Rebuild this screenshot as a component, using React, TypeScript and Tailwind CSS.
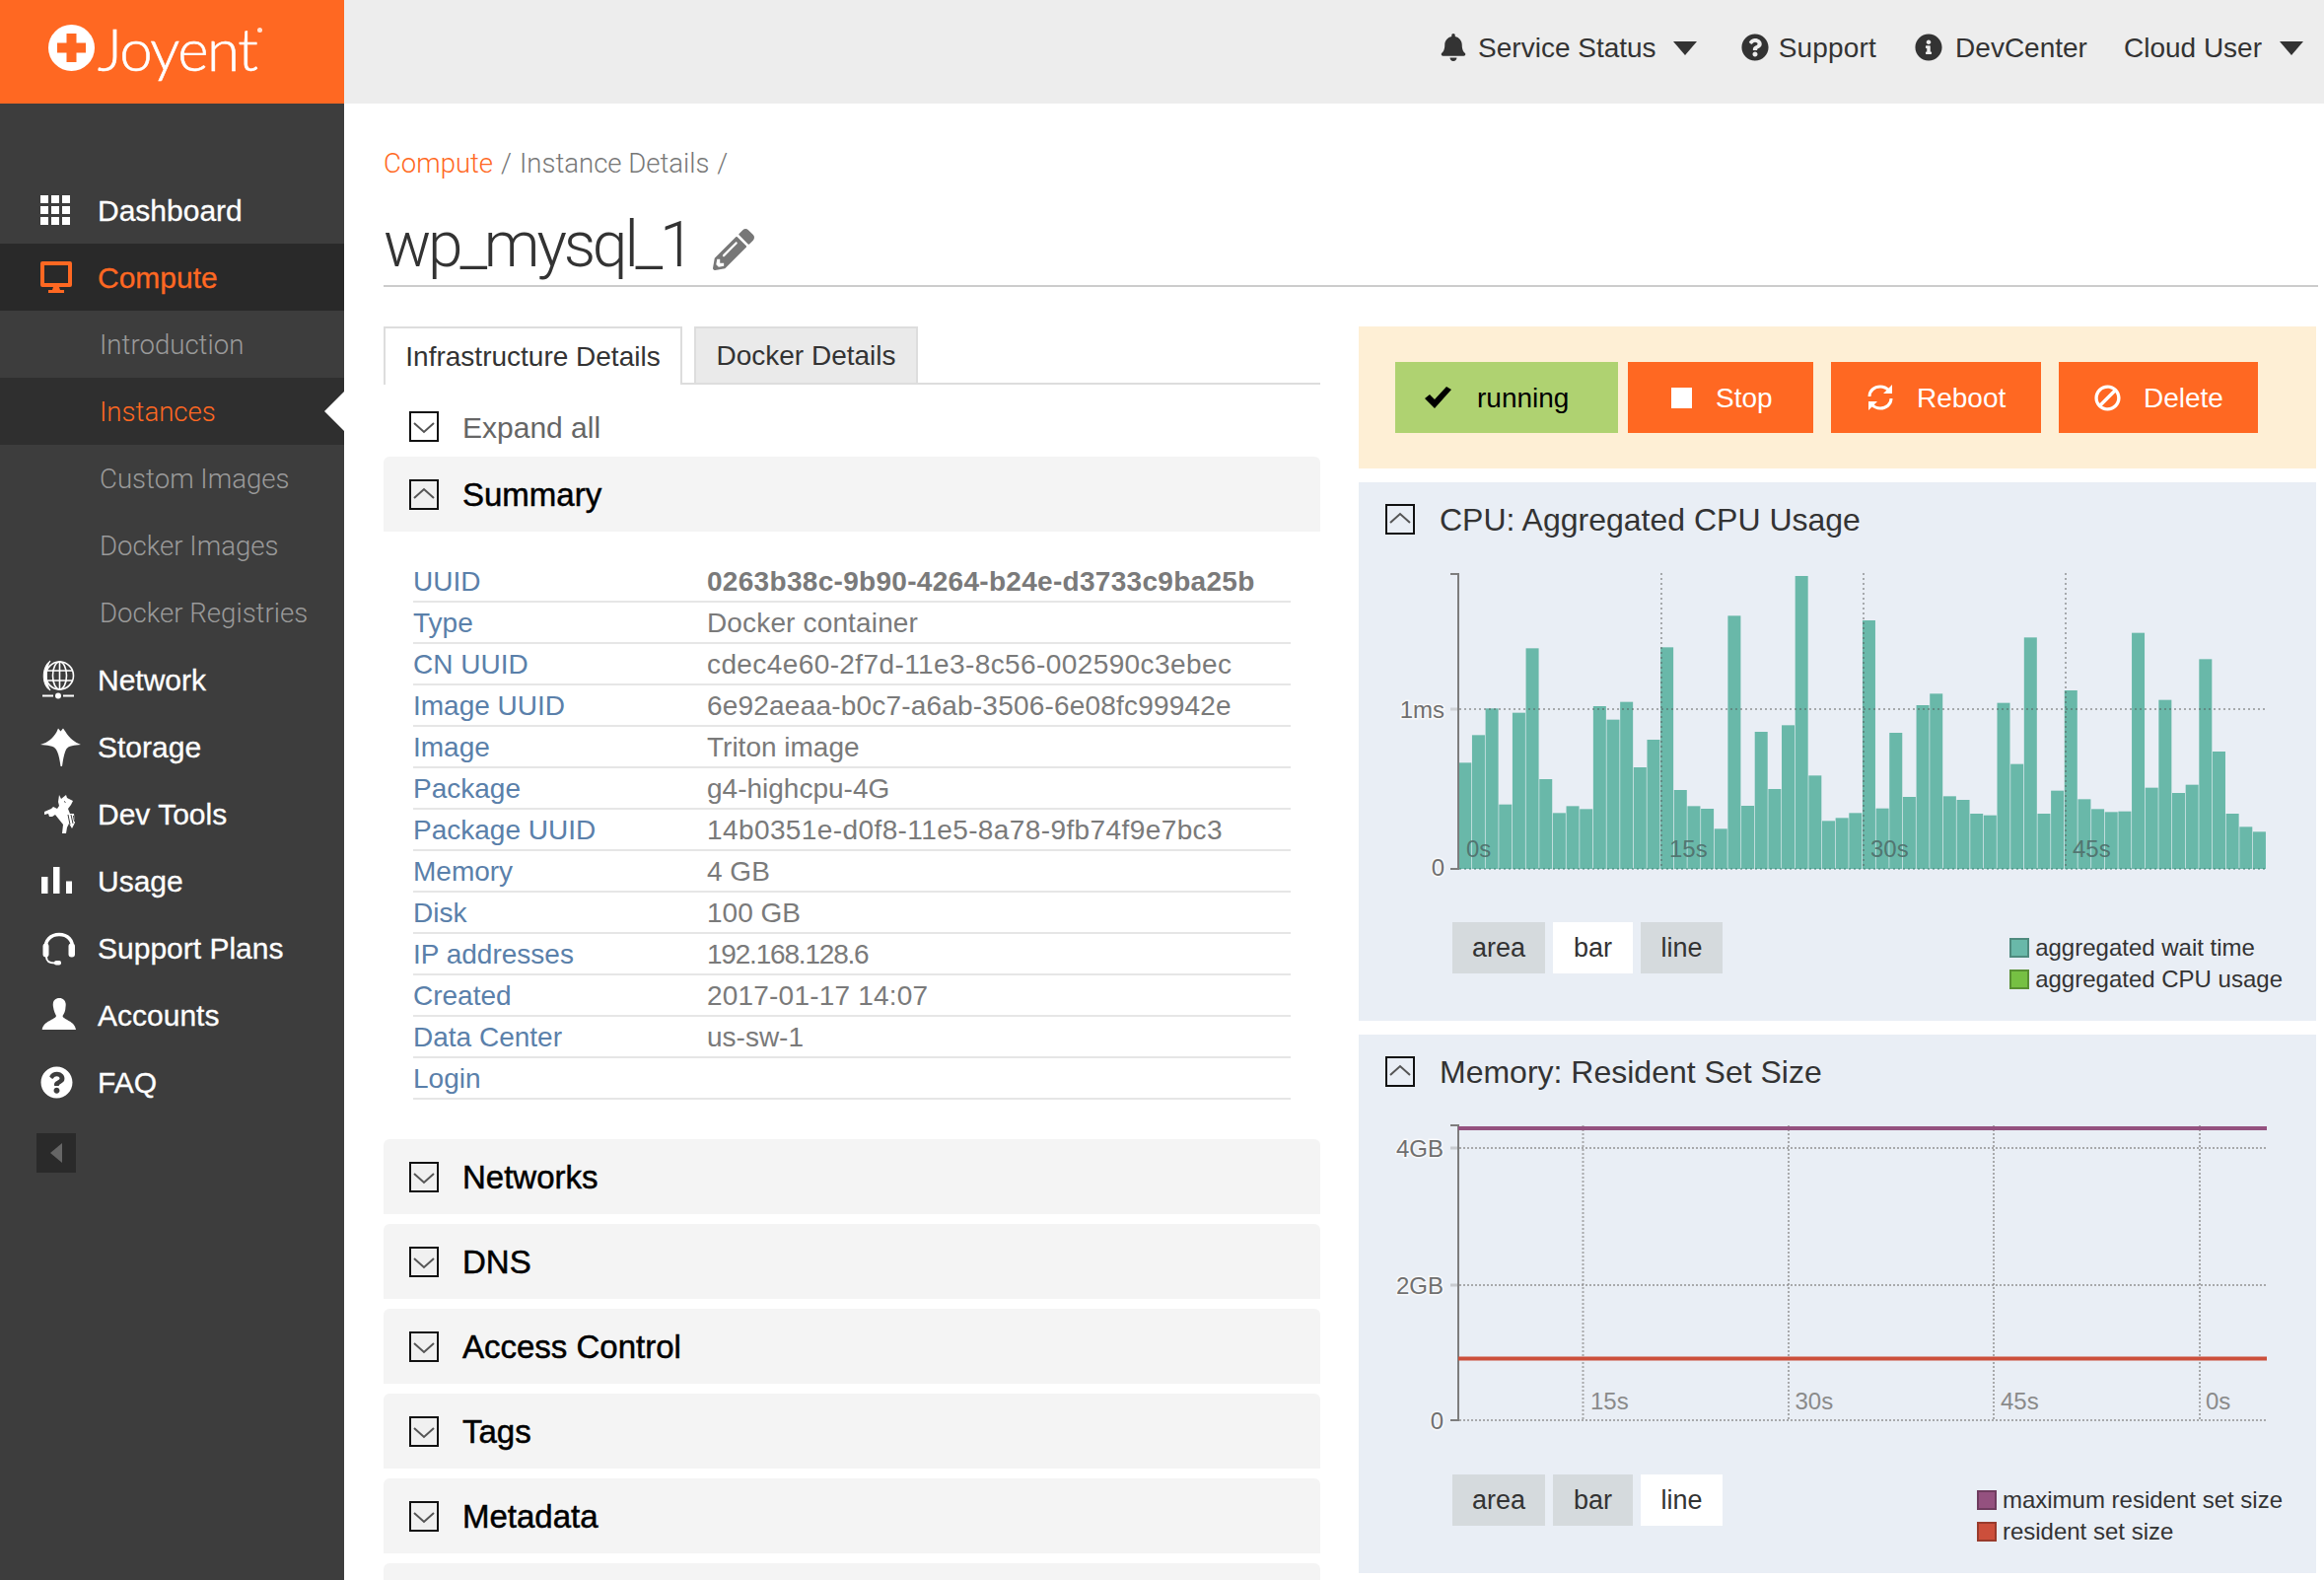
import { FaBell, FaBan, FaInfoCircle, FaPencilAlt, FaQuestionCircle } from 'react-icons/fa'

const orange = 'text-[#ff6822]'

// bar tops, read off the reference in page pixels
const cpuTops = [
  700, 616, 535, 827, 548, 352, 750, 853, 832, 841, 528, 569, 515, 714, 630, 349, 783, 832, 840, 901, 253, 831, 606, 780,
  586, 132, 739, 877, 868, 853, 267, 839, 609, 804, 525, 490, 802, 813, 855, 860, 518, 704, 319, 855, 785, 480, 811, 841,
  850, 848, 305, 776, 509, 792, 767, 385, 666, 855, 895, 910,
].map((z) => 540 + z / 3)

const summaryRows = [
  { k: 'UUID', v: '0263b38c-9b90-4264-b24e-d3733c9ba25b', cls: 'font-bold tracking-[0.3px]' },
  { k: 'Type', v: 'Docker container', cls: 'tracking-[0.15px]' },
  { k: 'CN UUID', v: 'cdec4e60-2f7d-11e3-8c56-002590c3ebec', cls: 'tracking-[0.4px]' },
  { k: 'Image UUID', v: '6e92aeaa-b0c7-a6ab-3506-6e08fc99942e', cls: 'tracking-[0.2px]' },
  { k: 'Image', v: 'Triton image', cls: '' },
  { k: 'Package', v: 'g4-highcpu-4G', cls: '' },
  { k: 'Package UUID', v: '14b0351e-d0f8-11e5-8a78-9fb74f9e7bc3', cls: 'tracking-[0.4px]' },
  { k: 'Memory', v: '4 GB', cls: '' },
  { k: 'Disk', v: '100 GB', cls: '' },
  { k: 'IP addresses', v: '192.168.128.6', cls: 'tracking-[-1.2px]' },
  { k: 'Created', v: '2017-01-17 14:07', cls: 'tracking-[0.2px]' },
  { k: 'Data Center', v: 'us-sw-1', cls: '' },
  { k: 'Login', v: '', cls: '' },
]

function GridIcon() {
  const cells = [0, 11, 22]
  return (
    <svg width="30" height="30" viewBox="0 0 30 30" fill="#fff">
      {cells.map((y) => cells.map((x) => <rect key={`${x}-${y}`} x={x} y={y} width="8" height="8" />))}
    </svg>
  )
}

function MonitorIcon() {
  return (
    <svg width="32" height="32" viewBox="0 0 32 32" fill="#ff6822">
      <path d="M2 0h28a2 2 0 0 1 2 2v22a2 2 0 0 1-2 2H2a2 2 0 0 1-2-2V2a2 2 0 0 1 2-2zm2 4v18h24V4z" fillRule="evenodd" />
      <path d="M13 26h6l1 3h4v3H8v-3h4z" />
    </svg>
  )
}

function GlobeIcon() {
  return (
    <svg width="36" height="44" viewBox="0 0 36 44" fill="none" stroke="#fff" strokeWidth="1.6">
      <circle cx="19.5" cy="18" r="14" />
      <ellipse cx="19.5" cy="18" rx="7" ry="14" />
      <path d="M19.5 4v28M6 13h27M6 23h27" />
      <path d="M10 3C1 9 1 28 10 33C5 26 5 10 10 3Z" fill="#fff" stroke="#fff" strokeWidth="1" />
      <path d="M2 38.5h11M23 38.5h11" strokeWidth="2" />
      <circle cx="18" cy="38.5" r="3" fill="#fff" stroke="none" />
    </svg>
  )
}

function MantaIcon() {
  return (
    <svg width="42" height="44" viewBox="0 0 42 44" fill="#fff">
      <path d="M0 20C8 18 13 13 16.500 7L18 3.500L20.500 6.500L23 3.500L25.500 7C29 13 35 18 41 20C35 20.500 28 21 26 25C24 29 23 35 22 42L20.500 42C19.500 35 18.500 29 16 25C14 21 6 20.500 0 20Z" />
    </svg>
  )
}

function PonyIcon() {
  return (
    <svg width="36" height="44" viewBox="0 0 36 44" fill="#fff">
      <path d="M19 3L21 7L26 3L27 6L33 9L31 13L28 17L30 22L34 22L35 31L32 37L29 32L27 36L26 42L22 42L23 33L19 28L15 23L12 25L9 25L8 22L4 23L4 20L11 17L13 15L17 17L19 14L18 10Z" />
      <path d="M28 23L30 33M31 23L33 32M33.500 24L34.500 30M24 9.500L25.500 10.500" stroke="#3d3d3d" strokeWidth="1" fill="none" />
    </svg>
  )
}

function BarsIcon() {
  return (
    <svg width="32" height="28" viewBox="0 0 32 28" fill="#fff">
      <rect x="1" y="10" width="6.500" height="17" />
      <rect x="13" y="0" width="6.500" height="27" />
      <rect x="26" y="14.500" width="6.500" height="12.500" />
    </svg>
  )
}

function HeadsetIcon() {
  return (
    <svg width="38" height="44" viewBox="0 0 38 44" fill="none" stroke="#fff">
      <path d="M5.500 24C4 14 11 8.500 19 8.500C27 8.500 34 14 32 24" strokeWidth="3.500" />
      <rect x="28.500" y="17.500" width="6.500" height="14" rx="3" fill="#fff" stroke="none" />
      <rect x="2.500" y="17.500" width="6" height="14" rx="3" fill="#fff" stroke="none" />
      <path d="M6 31C6 36 9 37.500 15 37.500" strokeWidth="2" />
      <rect x="14" y="35" width="7" height="4.500" rx="2" fill="#fff" stroke="none" />
    </svg>
  )
}

function PersonIcon() {
  return (
    <svg width="38" height="44" viewBox="0 0 38 44" fill="#fff">
      <path d="M19.300 5C14 5 12 9 13 14C13.500 18 15 21 16 23C15 27 3 28 1.700 37L36 37C35 28 23 27 22.500 23C24 21 25.500 18 25.500 14C26.500 9 24 5 19.300 5Z" />
    </svg>
  )
}

function NavRow({ icon, label, active }: { icon: React.ReactNode; label: string; active?: boolean }) {
  return (
    <div className={`flex h-[68px] items-center ${active ? 'bg-[#292929]' : ''}`}>
      <div className="flex w-[99px] shrink-0 items-center pl-[41px]">{icon}</div>
      <span className={`text-[30px] [-webkit-text-stroke:0.3px] ${active ? orange : 'text-white'}`}>{label}</span>
    </div>
  )
}

function SubRow({ label, active }: { label: string; active?: boolean }) {
  return (
    <div className={`relative flex h-[68px] items-center pt-[1px] pl-[101px] font-['Roboto',sans-serif] text-[27.600px] font-light ${active ? `bg-[#2f2f2f] ${orange}` : 'text-[#9a9a9a]'}`}>
      {label}
      {active && (
        <span className="absolute top-[14px] right-0 h-0 w-0 border-y-[20px] border-r-[20px] border-y-transparent border-r-white" />
      )}
    </div>
  )
}

function Sidebar() {
  return (
    <aside className="flex w-[349px] shrink-0 flex-col bg-[#3d3d3d]">
      <div className="relative flex h-[105px] items-center bg-[#ff6822] pb-[8px] pl-[49px]">
        <svg width="47" height="47" viewBox="0 0 47 47">
          <circle cx="23.500" cy="23.500" r="23.500" fill="#fff" />
          <path d="M18.500 9h10v9.500H38v10h-9.500V38h-10v-9.500H9v-10h9.500z" fill="#ff6822" />
        </svg>
        <span className="ml-[3px] font-['Lato',sans-serif] text-[60px] leading-none font-light tracking-[-1.5px] text-white [-webkit-text-stroke:0.6px]">Joyent</span>
        <span className="absolute top-[28px] left-[261px] h-[5px] w-[5px] rounded-full bg-white/80" />
      </div>
      <div className="pt-[74px]">
        <NavRow icon={<GridIcon />} label="Dashboard" />
        <NavRow icon={<MonitorIcon />} label="Compute" active />
        <SubRow label="Introduction" />
        <SubRow label="Instances" active />
        <SubRow label="Custom Images" />
        <SubRow label="Docker Images" />
        <SubRow label="Docker Registries" />
        <NavRow icon={<GlobeIcon />} label="Network" />
        <NavRow icon={<MantaIcon />} label="Storage" />
        <NavRow icon={<PonyIcon />} label="Dev Tools" />
        <NavRow icon={<BarsIcon />} label="Usage" />
        <NavRow icon={<HeadsetIcon />} label="Support Plans" />
        <NavRow icon={<PersonIcon />} label="Accounts" />
        <NavRow icon={<FaQuestionCircle size={33} color="#fff" />} label="FAQ" />
      </div>
      <div className="mt-[18px] ml-[37px] flex h-[40px] w-[40px] items-center justify-center bg-[#2a2a2a]">
        <span className="h-0 w-0 border-y-[10px] border-r-[12px] border-y-transparent border-r-[#666]" />
      </div>
    </aside>
  )
}

function Caret() {
  return <span className="h-0 w-0 border-x-[12px] border-t-[14px] border-x-transparent border-t-[#333]" />
}

function TopBar() {
  return (
    <header className="flex h-[105px] items-center justify-end bg-[#ededed] pr-[21px] pb-[7px] text-[28px] text-[#333]">
      <FaBell size={28} className="mb-[3px]" />
      <span className="ml-[11px]">Service Status</span>
      <span className="mr-[45px] ml-[17px] flex items-center"><Caret /></span>
      <FaQuestionCircle size={28} className="mb-[2px]" />
      <span className="mr-[39px] ml-[10px] tracking-[0.2px]">Support</span>
      <FaInfoCircle size={28} className="mb-[2px]" />
      <span className="mr-[37px] ml-[13px]">DevCenter</span>
      <span>Cloud User</span>
      <span className="ml-[18px] flex items-center"><Caret /></span>
    </header>
  )
}

function BoxToggle({ open, dark }: { open?: boolean; dark?: boolean }) {
  return (
    <svg width="30" height="31" viewBox="0 0 30 31" className="shrink-0">
      <rect x="1" y="1" width="28" height="29" fill={dark ? '#f0f0f0' : 'none'} stroke="#111" strokeWidth="2" />
      <path d={open ? 'M5 19L15 10L25 19' : 'M5 12L15 21L25 12'} fill="none" stroke="#555" strokeWidth="2" />
    </svg>
  )
}

function Section({ title }: { title: string }) {
  return (
    <div className="flex h-[76px] items-center rounded-t-[6px] bg-[#f4f4f4] pl-[26px]">
      <BoxToggle dark />
      <span className="ml-[24px] pt-[1px] text-[33px] text-black [-webkit-text-stroke:0.5px]">{title}</span>
    </div>
  )
}

function LeftColumn() {
  return (
    <div className="w-[950px] shrink-0">
      <div className="flex h-[59px] gap-[12px] border-b-2 border-[#ddd] text-[28px] text-[#333]">
        <div className="flex h-[59px] w-[303px] items-center justify-center border-2 border-b-0 border-[#ddd] bg-white">Infrastructure Details</div>
        <div className="flex h-[57px] w-[227px] items-center justify-center border-2 border-b-0 border-[#ddd] bg-[#eaeaea]">Docker Details</div>
      </div>
      <div className="flex h-[73px] items-center pt-[13px] pl-[26px]">
        <span className="-mt-[2px]"><BoxToggle /></span>
        <span className="ml-[24px] text-[30px] text-[#666]">Expand all</span>
      </div>
      <div className="flex h-[76px] items-center rounded-t-[6px] bg-[#f4f4f4] pl-[26px]">
        <BoxToggle open dark />
        <span className="ml-[24px] pt-[1px] text-[33px] text-black [-webkit-text-stroke:0.5px]">Summary</span>
      </div>
      <div className="mx-[30px] mt-[30px] text-[28px]">
        {summaryRows.map((row) => (
          <div key={row.k} className="flex h-[42px] items-center border-b-2 border-[#e6e6e6] pt-[2px]">
            <span className="w-[298px] text-[#5a80aa]">{row.k}</span>
            <span className={`text-[#7a7a7a] ${row.cls}`}>{row.v}</span>
          </div>
        ))}
      </div>
      <div className="mt-[40px] flex flex-col gap-[10px]">
        <Section title="Networks" />
        <Section title="DNS" />
        <Section title="Access Control" />
        <Section title="Tags" />
        <Section title="Metadata" />
        <div className="h-[76px] rounded-t-[6px] bg-[#f4f4f4]" />
      </div>
    </div>
  )
}

function ActionButton({ icon, label, className }: { icon: React.ReactNode; label: string; className: string }) {
  return (
    <div className={`flex h-[72px] items-center bg-[#ff6822] text-[28px] text-white ${className}`}>
      {icon}
      <span className="pt-[1px]">{label}</span>
    </div>
  )
}

function StatusPanel() {
  return (
    <div className="flex h-[144px] items-center bg-[#feefd5] pl-[37px]">
      <div className="flex h-[72px] w-[226px] items-center bg-[#afd271] pl-[30px] text-[28px] text-black">
        <svg width="27" height="22" viewBox="0 0 27 22" fill="#000">
          <path d="M0 12L5 8L10 13L22 0L27 3L10 22Z" />
        </svg>
        <span className="ml-[26px] pt-[1px]">running</span>
      </div>
      <ActionButton
        className="ml-[10px] w-[188px] pl-[44px]"
        label="Stop"
        icon={<span className="mr-[24px] h-[21px] w-[21px] bg-white" />}
      />
      <ActionButton
        className="ml-[18px] w-[213px] pl-[36px]"
        label="Reboot"
        icon={
          <svg width="28" height="28" viewBox="0 0 28 28" fill="none" stroke="#fff" strokeWidth="3" className="mr-[23px]">
            <path d="M3 13C3 7 8 3 14 3C18 3 21 5 23 7M25 15C25 21 20 25 14 25C10 25 7 23 5 21" />
            <path d="M26 1V10H17Z M2 27V18H11Z" fill="#fff" stroke="none" />
          </svg>
        }
      />
      <ActionButton
        className="ml-[18px] w-[202px] pl-[36px]"
        label="Delete"
        icon={<FaBan size={27} className="mr-[23px] -scale-x-100" />}
      />
    </div>
  )
}

function AxisLabel({ x, y, children }: { x: number; y: number; children: string }) {
  return (
    <text x={x} y={y} textAnchor="end" fontSize="24" fill="#6f6f6f" stroke="#f7f8fa" strokeWidth="3" paintOrder="stroke">
      {children}
    </text>
  )
}

function CpuChart() {
  return (
    <svg width="971" height="360" viewBox="1378 563 971 360" className="block">
      {cpuTops.map((top, i) => (
        <rect key={i} x={1479.3 + i * 13.655} y={top} width="13" height={881 - top} fill="#69b8a9" />
      ))}
      <g stroke="#555" strokeOpacity="0.45" strokeWidth="2" strokeDasharray="2 3">
        <path d="M1685 581V881M1890 581V881M2095 581V881M1480 719H2297" />
        <path d="M1480 881H2298" stroke="#2f7466" />
      </g>
      <path d="M1471 582H1479V881H1471" fill="none" stroke="#7d7d7d" strokeWidth="2" />
      <path d="M1471 719H1478" stroke="#cfd2d6" strokeWidth="3" />
      <g fontSize="24" fill="#4f6d6a" fillOpacity="0.9">
        <text x="1487" y="869">0s</text>
        <text x="1693" y="869">15s</text>
        <text x="1897" y="869">30s</text>
        <text x="2102" y="869">45s</text>
      </g>
      <AxisLabel x={1465} y={728}>1ms</AxisLabel>
      <AxisLabel x={1465} y={888}>0</AxisLabel>
    </svg>
  )
}

function MemoryChart() {
  return (
    <svg width="971" height="360" viewBox="1378 1123 971 360" className="block">
      <g stroke="#8c8c8c" strokeOpacity="0.7" strokeWidth="2" strokeDasharray="2 2">
        <path d="M1605.500 1141V1440M1814 1141V1440M2022 1141V1440M2231 1141V1440" />
        <path d="M1480 1164H2298M1480 1303H2298M1480 1440H2298" />
      </g>
      <path d="M1471 1141H1479V1440H1471" fill="none" stroke="#7d7d7d" strokeWidth="2" />
      <path d="M1471 1164H1478M1471 1303H1478" stroke="#c8cbd0" strokeWidth="3" />
      <rect x="1479" y="1142" width="820" height="4" fill="#94517f" />
      <rect x="1479" y="1375.500" width="820" height="4" fill="#cc4f3b" />
      <g fontSize="24" fill="#8a8a8a">
        <text x="1613" y="1429">15s</text>
        <text x="1820.500" y="1429">30s</text>
        <text x="2029" y="1429">45s</text>
        <text x="2237" y="1429">0s</text>
      </g>
      <AxisLabel x={1464} y={1173}>4GB</AxisLabel>
      <AxisLabel x={1464} y={1312}>2GB</AxisLabel>
      <AxisLabel x={1464} y={1449}>0</AxisLabel>
    </svg>
  )
}

function ChartPanel({ title, chart, active, legend }: {
  title: string
  chart: React.ReactNode
  active: string
  legend: { label: string; fill: string }[]
}) {
  return (
    <div className="h-[546px] bg-[#e9eef5]">
      <div className="flex h-[74px] items-center pl-[27px]">
        <BoxToggle open />
        <span className="ml-[25px] pt-[1px] text-[32px] text-[#333]">{title}</span>
      </div>
      {chart}
      <div className="mt-[12px] flex pr-[34px] pl-[95px]">
        <div className="flex gap-[8px] text-[27px] text-[#333]">
          {['area', 'bar', 'line'].map((mode) => (
            <div
              key={mode}
              className={`flex h-[52px] items-center justify-center ${mode === 'area' ? 'w-[94px]' : mode === 'bar' ? 'w-[81px]' : 'w-[83px]'} ${mode === active ? 'bg-white' : 'bg-[#d5dadd]'}`}
            >
              {mode}
            </div>
          ))}
        </div>
        <div className="mt-[10px] ml-auto text-[24px] text-[#333]">
          {legend.map((item) => (
            <div key={item.label} className="flex h-[32px] items-center gap-[6px]">
              <span className={`h-[20px] w-[20px] border-2 border-black/25 ${item.fill}`} />
              {item.label}
            </div>
          ))}
        </div>
      </div>
    </div>
  )
}

export default function App() {
  return (
    <div className="flex h-[1602px] overflow-hidden bg-white font-['Liberation_Sans',Arial,sans-serif]">
      <Sidebar />
      <main className="min-w-0 flex-1">
        <TopBar />
        <div className="pr-[6px] pl-[40px]">
          <div className="mt-[40px] flex h-[40px] items-center pt-[1px] font-['Roboto',sans-serif] text-[27.500px] font-light text-[#777]">
            <span className={orange}>Compute</span>
            <span className="mx-[8px]">/</span>
            <span>Instance Details</span>
            <span className="mx-[8px]">/</span>
          </div>
          <div className="flex h-[106px] items-end border-b-2 border-[#ccc]">
            <h1 className="font-['Roboto',sans-serif] text-[64px] leading-[80px] font-light tracking-[-3.2px] text-[#333]">wp_mysql_1</h1>
            <FaPencilAlt size={42} color="#777" className="mb-[15px] ml-[22px]" />
          </div>
          <div className="mt-[40px] flex gap-[39px]">
            <LeftColumn />
            <div className="flex w-[971px] shrink-0 flex-col gap-[14px]">
              <StatusPanel />
              <ChartPanel
                title="CPU: Aggregated CPU Usage"
                chart={<CpuChart />}
                active="bar"
                legend={[
                  { label: 'aggregated wait time', fill: 'bg-[#69b8a9]' },
                  { label: 'aggregated CPU usage', fill: 'bg-[#76c043]' },
                ]}
              />
              <ChartPanel
                title="Memory: Resident Set Size"
                chart={<MemoryChart />}
                active="line"
                legend={[
                  { label: 'maximum resident set size', fill: 'bg-[#94517f]' },
                  { label: 'resident set size', fill: 'bg-[#cc4f3b]' },
                ]}
              />
            </div>
          </div>
        </div>
      </main>
    </div>
  )
}
